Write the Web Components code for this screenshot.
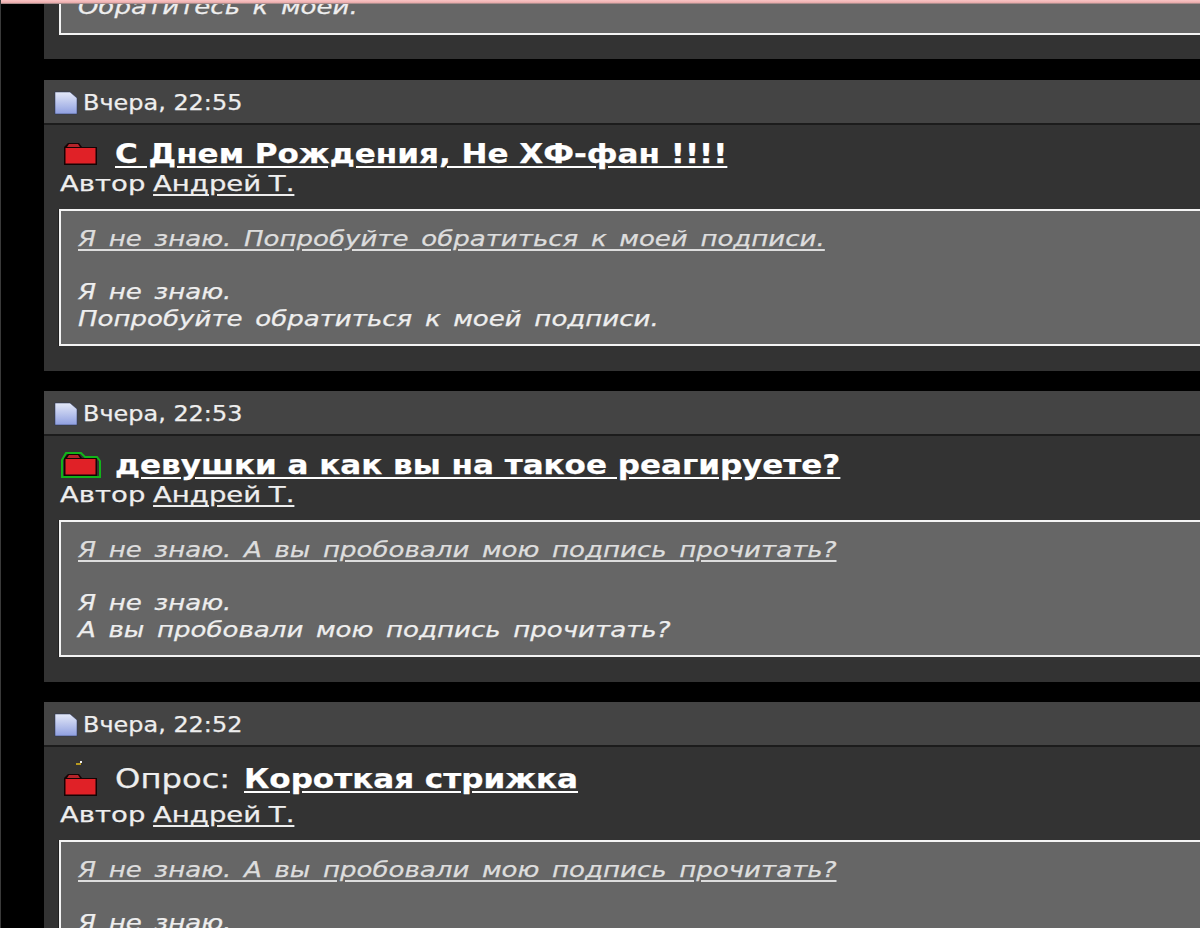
<!DOCTYPE html>
<html>
<head>
<meta charset="utf-8">
<title>Forum</title>
<style>
  html, body { margin: 0; height: 928px; overflow: hidden; background: #000; }
  body { font-family: "DejaVu Sans", Verdana, sans-serif; color: #eee; }
</style>
</head>
<body>
<template id="post-card-tpl">
  <style>
    :host { display: block; margin-bottom: 20px; background: #333; }
    /* the source text is stretched sideways, so each run keeps its own scaleX */
    .wide { display: inline-block; transform-origin: 0 50%; white-space: nowrap; -webkit-text-stroke: .25px currentColor; }
    header { display: flex; align-items: center; height: 43px; padding-left: 10px; background: #444; border-bottom: 2px solid #1c1c1c; font-size: 21px; color: #eee; }
    header svg { width: 24px; height: 24px; flex: none; margin: 2px 5px 0 0; }
    header .wide { transform: scaleX(1.14); padding-top: 2px; }
    .body { padding: 12px 0 25px 16px; }
    .title { display: flex; align-items: center; box-sizing: border-box; height: 34px; font-size: 26px; }
    .icon { width: 42px; height: 30px; margin-right: 13px; flex: none; overflow: visible; }
    .prefix { display: none; width: 129px; flex: none; }
    .prefix .wide { transform: scaleX(1.24); }
    .title a { font-weight: bold; color: #fff; text-decoration: underline; text-underline-offset: 3px; transform: scaleX(1.193); }
    :host([kind="poll"]) .title { height: 43px; padding-bottom: 3px; }
    :host([kind="poll"]) .icon { height: 43px; align-self: flex-start; }
    :host([kind="poll"]) .prefix { display: block; }
    .author { font-size: 21px; line-height: 26px; color: #eee; }
    .author .wide { transform: scaleX(1.31); word-spacing: -.8px; }
    .author a { color: #eee; text-decoration: underline; text-underline-offset: 3px; }
    .sig { margin: 12px 0 0 -1px; padding: 15px 0 12px 17px; background: #666; border: 2px solid #f4f4f4; border-right: none; box-shadow: -1px 0 0 #222; font-size: 21px; line-height: 26.5px; font-style: italic; color: #eee; overflow: hidden; }
    .sig .wide { transform: scaleX(1.24); word-spacing: 3.5px; }
    .sig u { display: block; margin-bottom: 26.5px; color: #ddd; text-underline-offset: 3px; }
  </style>
  <header>
    <svg viewBox="0 0 24 24"><defs><linearGradient id="p" x1="0" y1="0" x2="0" y2="1"><stop offset="0" stop-color="#e4e9f8"/><stop offset="1" stop-color="#8f9fe0"/></linearGradient></defs><path d="M1 1h15l7 6v16H1z" fill="url(#p)" stroke="#26305a" stroke-opacity=".5"/></svg>
    <span class="wide"><slot name="date"></slot></span>
  </header>
  <div class="body">
    <div class="title">
      <svg class="icon"><g id="folder"></g></svg>
      <span class="prefix"><span class="wide"><slot name="prefix"></slot></span></span>
      <a class="wide"><slot name="title"></slot></a>
    </div>
    <div class="author"><span class="wide">Автор <a><slot name="author"></slot></a></span></div>
    <div class="sig"><span class="wide"><u><slot name="sig-title"></slot></u><slot name="sig"></slot></span></div>
  </div>
</template>
<script>
  // folder drawings: plain, own-post (green outline), poll (small mark above)
  const folderAt = (y) => `
    <path d="M4 ${y + 22}V${y + 4}L8 ${y}H19L22 ${y + 4}H37V${y + 22}z" fill="#140405"/>
    <path d="M7 ${y + 4}L9 ${y + 1}H18L20 ${y + 4}z" fill="#b4242a"/>
    <rect x="5.5" y="${y + 5}" width="30" height="15.5" fill="#e02127"/>`;
  const GREEN = '<path d="M2 10l4-7h15l4 4h12l3 4v16H2z" fill="none" stroke="#12b31a" stroke-width="2"/>';
  const POLL = '<path d="M16 4h5v2h-5z" fill="#b89a20"/><path d="M20 2h2v2h-2z" fill="#eee"/>';

  class PostCard extends HTMLElement {
    constructor() {
      super();
      this.attachShadow({ mode: "open" });
      this.shadowRoot.appendChild(document.getElementById("post-card-tpl").content.cloneNode(true));
    }
    connectedCallback() {
      const kind = this.getAttribute("kind");
      const g = this.shadowRoot.querySelector("#folder");
      if (kind === "poll") g.innerHTML = folderAt(15) + POLL;
      else g.innerHTML = folderAt(4) + (kind === "own" ? GREEN : "");
    }
  }
  customElements.define("post-card", PostCard);

  class ForumPage extends HTMLElement {
    constructor() {
      super();
      this.attachShadow({ mode: "open" }).innerHTML = `
        <style>
          :host { display: block; height: 928px; overflow: hidden; position: relative; border-left: 1px solid #3a3a3a; }
          .bar { position: absolute; left: 0; right: 0; top: 0; height: 4px; background: linear-gradient(#f8c4c4, #f0b0b0 60%, #8a7a7a); z-index: 2; }
          .top { margin: -4px 0 21px; height: 63px; background: #333; }
          .top div { height: 39px; box-sizing: border-box; margin-left: 15px; padding-left: 17px; background: #666; border: 2px solid #f4f4f4; border-width: 0 0 2px 2px; font: italic 21px/22px "DejaVu Sans", sans-serif; color: #eee; overflow: hidden; -webkit-text-stroke: .25px currentColor; }
          .top span { display: inline-block; transform: scaleX(1.24); transform-origin: 0 50%; word-spacing: 3.5px; }
          .col { margin-left: 43px; width: 1156px; }
        </style>
        <div class="bar"></div>
        <div class="col">
          <div class="top"><div><span>Обратитесь к моей.</span></div></div>
          <slot></slot>
        </div>`;
    }
  }
  customElements.define("forum-page", ForumPage);
</script>
<forum-page>
  <post-card>
    <span slot="date">Вчера, 22:55</span>
    <span slot="title">С Днем Рождения, Не ХФ-фан !!!!</span>
    <span slot="author">Андрей Т.</span>
    <span slot="sig-title">Я не знаю. Попробуйте обратиться к моей подписи.</span>
    <span slot="sig">Я не знаю.<br>Попробуйте обратиться к моей подписи.</span>
  </post-card>
  <post-card kind="own">
    <span slot="date">Вчера, 22:53</span>
    <span slot="title">девушки а как вы на такое реагируете?</span>
    <span slot="author">Андрей Т.</span>
    <span slot="sig-title">Я не знаю. А вы пробовали мою подпись прочитать?</span>
    <span slot="sig">Я не знаю.<br>А вы пробовали мою подпись прочитать?</span>
  </post-card>
  <post-card kind="poll">
    <span slot="date">Вчера, 22:52</span>
    <span slot="prefix">Опрос:</span>
    <span slot="title">Короткая стрижка</span>
    <span slot="author">Андрей Т.</span>
    <span slot="sig-title">Я не знаю. А вы пробовали мою подпись прочитать?</span>
    <span slot="sig">Я не знаю.<br>А вы пробовали мою подпись прочитать?</span>
  </post-card>
</forum-page>
</body>
</html>
